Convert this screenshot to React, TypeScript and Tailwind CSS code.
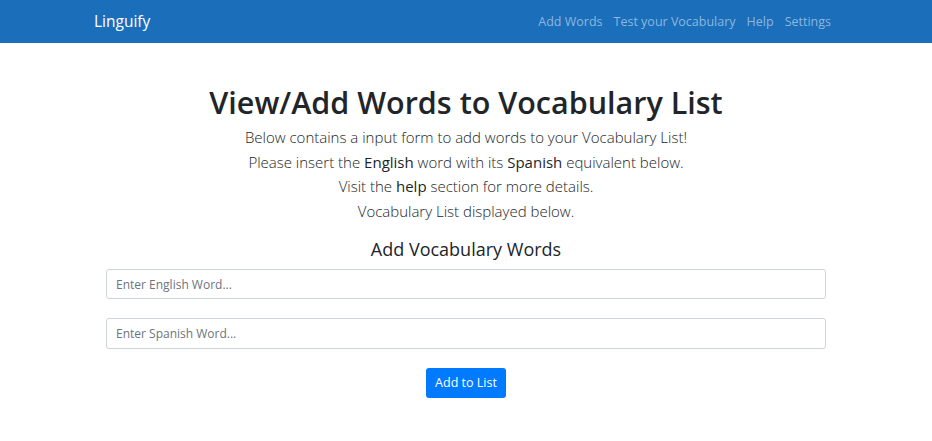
export default function App() {
  return (
    <div className="min-h-screen bg-white text-[#212529]" style={{ fontFamily: '"Open Sans", "Noto Sans", Arial, sans-serif' }}>
      <nav className="h-[43px] bg-[#1a6eba]">
        <div className="mx-auto flex h-full w-[744px] items-center justify-between pr-[7px] pt-[1px]">
          <span className="text-[15.5px] text-white">Linguify</span>
          <div className="flex gap-[11px] text-[12.5px] text-[#8db7de]">
            <span>Add Words</span>
            <span>Test your Vocabulary</span>
            <span>Help</span>
            <span>Settings</span>
          </div>
        </div>
      </nav>

      <main className="mx-auto w-[720px] pt-[39px] text-center">
        <h1 className="text-[30.5px] font-semibold leading-[40px]">View/Add Words to Vocabulary List</h1>
        <div className="mt-[3px] text-[15px] font-light leading-[24.5px]">
          <p>Below contains a input form to add words to your Vocabulary List!</p>
          <p>
            Please insert the <span className="font-normal">English</span> word with its{' '}
            <span className="font-normal">Spanish</span> equivalent below.
          </p>
          <p>
            Visit the <span className="font-normal">help</span> section for more details.
          </p>
          <p>Vocabulary List displayed below.</p>
        </div>

        <h2 className="mt-[13px] text-[18px] leading-[26px]">Add Vocabulary Words</h2>
        <div className="mt-[7px] flex flex-col gap-[19px]">
          <input
            placeholder="Enter English Word..."
            className="h-[30px] w-full rounded-[3px] border border-[#ced4da] px-[9px] text-[12px] placeholder:text-[#6c757d]"
          />
          <input
            placeholder="Enter Spanish Word..."
            className="h-[31px] w-full rounded-[3px] border border-[#ced4da] px-[9px] text-[12px] placeholder:text-[#6c757d]"
          />
        </div>
        <button className="mt-[19px] h-[30px] rounded-[3px] bg-[#007bff] px-[9.5px] text-[12.5px] text-white">
          Add to List
        </button>
      </main>
    </div>
  );
}
